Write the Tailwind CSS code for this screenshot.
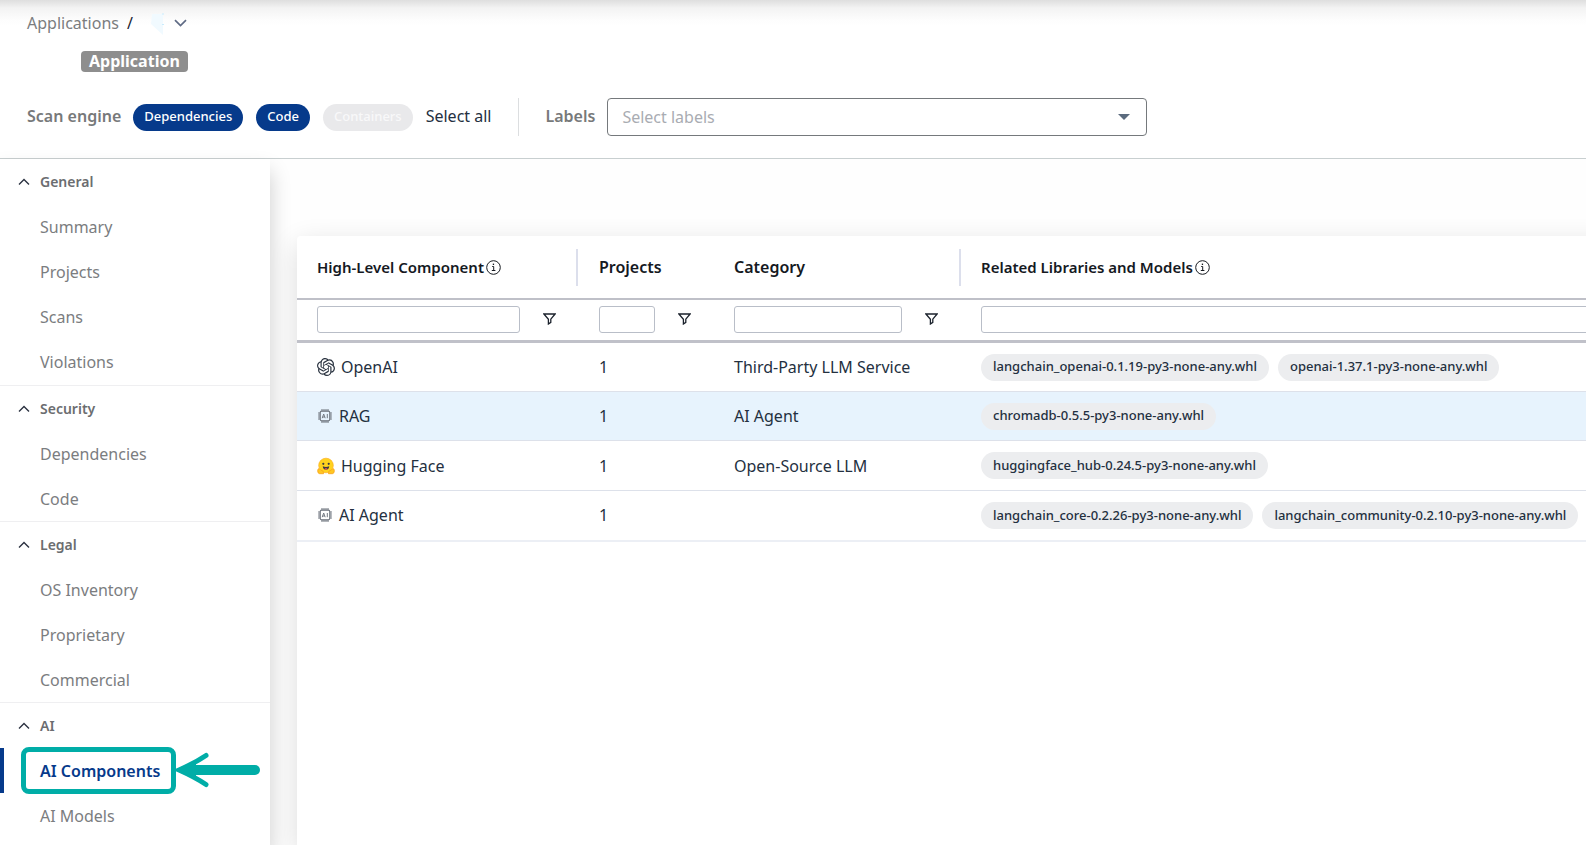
<!DOCTYPE html>
<html lang="en">
<head>
<meta charset="utf-8">
<meta name="viewport" content="width=device-width, initial-scale=1">
<title>AI Components</title>
<script src="https://cdn.jsdelivr.net/npm/@tailwindcss/browser@4"></script>
</head>
<body class="flex h-screen flex-col overflow-hidden bg-[#fefefe] font-['Noto_Sans',sans-serif] text-base text-[#24303f]">

<!-- Shared symbols -->
<svg class="hidden" aria-hidden="true">
  <symbol id="caret-up" viewBox="0 0 12 8"><path d="M1 6.500 6 1.500l5 5" fill="none" stroke="currentColor" stroke-width="1.400"/></symbol>
  <symbol id="info" viewBox="0 0 15 15"><circle cx="7.500" cy="7.500" r="6.800" fill="none" stroke="currentColor" stroke-width="1"/><path d="M6.200 6.500h1.500v4M5.800 10.500h3.600" fill="none" stroke="currentColor" stroke-width="1"/><rect x="6.800" y="3.600" width="1.300" height="1.400" fill="currentColor"/></symbol>
  <symbol id="filter" viewBox="0 0 13 12"><path d="M.9 1h11.200L7.800 6.200v3.200L5.400 11V6.200z" fill="none" stroke="currentColor" stroke-width="1.300"/></symbol>
  <symbol id="chip" viewBox="0 0 14 14"><path d="M4 0v2.500M6 0v2.500M8 0v2.500M10 0v2.500M4 11.500V14M6 11.500V14M8 11.500V14M10 11.500V14M0 4h2.500M0 6h2.500M0 8h2.500M0 10h2.500M11.500 4H14M11.500 6H14M11.500 8H14M11.500 10H14" stroke="currentColor" stroke-width="1.100"/><rect x="2.200" y="2.200" width="9.600" height="9.600" rx="1.500" fill="none" stroke="currentColor" stroke-width="1.200"/><path d="M4.200 9.200 5.700 5l1.500 4.200M4.700 8h2M9.300 5v4.200" fill="none" stroke="currentColor" stroke-width="1"/></symbol>
</svg>

<header class="flex-none border-b border-[#c8cfd0] bg-[linear-gradient(to_bottom,#dedede_0px,#f3f3f3_8px,#fdfdfd_20px,#ffffff_26px)] pb-[22px]">
  <nav aria-label="Breadcrumb" class="flex h-[46px] items-center pl-[27px] text-[#7b7d7f]">
    <a href="#">Applications</a>
    <span class="ml-2 text-[#1b2433]">/</span>
    <svg class="ml-[17px] h-[26px] w-[16px]" viewBox="0 0 16 26" aria-hidden="true"><path d="M2 4h11v21L1 14z" fill="#f1faff"/><path d="M12 4h2M12 14.500h2" stroke="#c9ecfd"/></svg>
    <button type="button" aria-label="Switch application" class="ml-2 text-[#5f6b85]"><svg class="h-2 w-[13px]" viewBox="0 0 13 8"><path d="m1 1.200 5.500 5.300L12 1.200" fill="none" stroke="currentColor" stroke-width="1.700"/></svg></button>
  </nav>
  <div class="mt-[5px] flex pl-[81px]">
    <span class="flex h-[21px] items-center rounded-[4px] bg-[#8e8e8e] px-2 pb-0.5 font-bold text-white">Application</span>
  </div>
  <div class="mt-[26px] flex h-[38px] items-center pl-[27px]">
    <span class="mr-3 pb-0.5 font-semibold text-[#77797a]">Scan engine</span>
    <div class="flex items-center gap-[13px] text-[13px] font-medium text-white">
      <button type="button" class="h-[27px] rounded-full bg-[#063a8b] px-[11px]">Dependencies</button>
      <button type="button" class="h-[27px] rounded-full bg-[#063a8b] px-[11px]">Code</button>
      <button type="button" disabled class="h-[27px] rounded-full bg-[#e9e9eb] px-[11px] text-[#f8f8f9]">Containers</button>
    </div>
    <button type="button" class="ml-[13px] pb-0.5">Select all</button>
    <span class="ml-[26px] h-full w-px bg-[#dcdee0]"></span>
    <label for="labels" class="ml-[27px] pb-0.5 font-semibold text-[#77797a]">Labels</label>
    <div class="relative ml-3 w-[540px]">
      <select id="labels" class="h-[38px] w-full appearance-none rounded-[4px] border border-[#75797c] bg-white pl-[14px] text-[#a9acb2]"><option>Select labels</option></select>
      <svg class="pointer-events-none absolute top-4 right-[17px] h-[6px] w-3" viewBox="0 0 12 6" aria-hidden="true"><path d="M0 0h12L6 6z" fill="#5b6b7e"/></svg>
    </div>
  </div>
</header>

<div class="flex min-h-0 flex-1">
  <aside class="z-10 w-[270px] flex-none bg-white shadow-[0_12px_20px_rgba(0,0,0,0.2)]">
    <nav aria-label="Application sections" class="text-[#7b7d7f]">
      <section class="border-b border-[#efeff1] pb-px">
        <button type="button" class="flex h-[45px] w-full items-center gap-[10px] pl-[18px] text-sm font-semibold text-[#6b6d70]"><svg class="h-2 w-3 text-[#2b3240]"><use href="#caret-up"/></svg>General</button>
        <ul>
          <li><a href="#" class="flex h-[45px] items-center pl-10">Summary</a></li>
          <li><a href="#" class="flex h-[45px] items-center pl-10">Projects</a></li>
          <li><a href="#" class="flex h-[45px] items-center pl-10">Scans</a></li>
          <li><a href="#" class="flex h-[45px] items-center pl-10">Violations</a></li>
        </ul>
      </section>
      <section class="border-b border-[#efeff1]">
        <button type="button" class="flex h-[45px] w-full items-center gap-[10px] pl-[18px] text-sm font-semibold text-[#6b6d70]"><svg class="h-2 w-3 text-[#2b3240]"><use href="#caret-up"/></svg>Security</button>
        <ul>
          <li><a href="#" class="flex h-[45px] items-center pl-10">Dependencies</a></li>
          <li><a href="#" class="flex h-[45px] items-center pl-10">Code</a></li>
        </ul>
      </section>
      <section class="border-b border-[#efeff1]">
        <button type="button" class="flex h-[45px] w-full items-center gap-[10px] pl-[18px] text-sm font-semibold text-[#6b6d70]"><svg class="h-2 w-3 text-[#2b3240]"><use href="#caret-up"/></svg>Legal</button>
        <ul>
          <li><a href="#" class="flex h-[45px] items-center pl-10">OS Inventory</a></li>
          <li><a href="#" class="flex h-[45px] items-center pl-10">Proprietary</a></li>
          <li><a href="#" class="flex h-[45px] items-center pl-10">Commercial</a></li>
        </ul>
      </section>
      <section>
        <button type="button" class="flex h-[45px] w-full items-center gap-[10px] pl-[18px] text-sm font-semibold text-[#6b6d70]"><svg class="h-2 w-3 text-[#2b3240]"><use href="#caret-up"/></svg>AI</button>
        <ul>
          <li class="relative">
            <a href="#" aria-current="page" class="flex h-[45px] items-center border-l-4 border-[#063a8b] pl-9 font-semibold text-[#063a8b]">AI Components</a>
            <!-- Callout: box and arrow -->
            <span class="pointer-events-none absolute -top-px left-[21px] h-[47px] w-[155px] rounded-[8px] border-[5px] border-[#00ada7]"></span>
            <svg class="pointer-events-none absolute top-1 left-[174px] h-[36px] w-[88px]" viewBox="0 0 88 36" aria-hidden="true"><g fill="none" stroke="#00ada7" stroke-linecap="round"><path d="M14 18h67" stroke-width="10"/><path d="M32 3.500C23 9.500 14 14 5 18c9 4 18 8.500 27 14.500" stroke-width="5"/></g><path d="M1 18 22 8v20z" fill="#00ada7"/></svg>
          </li>
          <li><a href="#" class="flex h-[45px] items-center pl-10">AI Models</a></li>
        </ul>
      </section>
    </nav>
  </aside>

  <main class="min-w-0 flex-1 overflow-hidden pt-[77px] pl-[27px]">
    <div class="-mr-8 h-full rounded-tl-[4px] bg-white pr-8 shadow-[0_8px_28px_rgba(0,0,0,0.14)]">
      <table class="w-[calc(100%+120px)] table-fixed border-collapse text-left">
        <colgroup><col class="w-[282px]"><col class="w-[135px]"><col class="w-[247px]"><col></colgroup>
        <thead>
          <tr class="border-b-2 border-[#bfc0c8] text-[#15191f]">
            <th scope="col" class="p-0 pl-5 font-semibold"><div class="flex h-[62px] items-center justify-between text-[15px]"><span class="flex items-center gap-0.5">High-Level Component<svg class="h-[15px] w-[15px]"><use href="#info"/></svg></span><span class="mr-px h-[37px] w-[2px] bg-[#dcdfec]"></span></div></th>
            <th scope="col" class="p-0 pl-5 font-semibold">Projects</th>
            <th scope="col" class="p-0 pl-5 font-semibold"><div class="flex items-center justify-between">Category<span class="h-[37px] w-[2px] bg-[#dcdfec]"></span></div></th>
            <th scope="col" class="p-0 pl-5 text-[15px] font-semibold"><span class="flex items-center gap-0.5">Related Libraries and Models<svg class="h-[15px] w-[15px]"><use href="#info"/></svg></span></th>
          </tr>
          <tr class="border-b-[3px] border-[#c0c1c9]">
            <td class="p-0 pl-5"><div class="flex h-[40px] items-center pr-[23px] pb-0.5"><input type="text" aria-label="Filter by component" class="h-[27px] min-w-0 flex-1 rounded-[3px] border border-[#b9bec8] px-2"><button type="button" aria-label="Component filter options" class="flex w-[36px] flex-none justify-end text-[#1b222c]"><svg class="h-3 w-[13px]"><use href="#filter"/></svg></button></div></td>
            <td class="p-0 pl-5"><div class="flex h-[40px] items-center pr-[23px] pb-0.5"><input type="text" aria-label="Filter by projects" class="h-[27px] min-w-0 flex-1 rounded-[3px] border border-[#b9bec8] px-2"><button type="button" aria-label="Projects filter options" class="flex w-[36px] flex-none justify-end text-[#1b222c]"><svg class="h-3 w-[13px]"><use href="#filter"/></svg></button></div></td>
            <td class="p-0 pl-5"><div class="flex h-[40px] items-center pr-[23px] pb-0.5"><input type="text" aria-label="Filter by category" class="h-[27px] min-w-0 flex-1 rounded-[3px] border border-[#b9bec8] px-2"><button type="button" aria-label="Category filter options" class="flex w-[36px] flex-none justify-end text-[#1b222c]"><svg class="h-3 w-[13px]"><use href="#filter"/></svg></button></div></td>
            <td class="p-0 pl-5"><div class="flex h-[40px] items-center pr-[23px] pb-0.5"><input type="text" aria-label="Filter by libraries and models" class="h-[27px] min-w-0 flex-1 rounded-[3px] border border-[#b9bec8] px-2"></div></td>
          </tr>
        </thead>
        <tbody>
          <tr class="h-[50px] border-b border-[#dde1ea]">
            <td class="p-0 pl-5"><div class="flex items-center gap-[6px]"><svg class="h-[18px] w-[18px]" viewBox="0 0 24 24" fill="#2a3340" aria-hidden="true"><path d="M22.2819 9.8211a5.9847 5.9847 0 0 0-.5157-4.9108 6.0462 6.0462 0 0 0-6.5098-2.9A6.0651 6.0651 0 0 0 4.9807 4.1818a5.9847 5.9847 0 0 0-3.9977 2.9 6.0462 6.0462 0 0 0 .7427 7.0966 5.98 5.98 0 0 0 .511 4.9107 6.051 6.051 0 0 0 6.5146 2.9001A5.9847 5.9847 0 0 0 13.2599 24a6.0557 6.0557 0 0 0 5.7718-4.2058 5.9894 5.9894 0 0 0 3.9977-2.9001 6.0557 6.0557 0 0 0-.7475-7.0729zm-9.022 12.6081a4.4755 4.4755 0 0 1-2.8764-1.0408l.1419-.0804 4.7783-2.7582a.7948.7948 0 0 0 .3927-.6813v-6.7369l2.02 1.1686a.071.071 0 0 1 .038.052v5.5826a4.504 4.504 0 0 1-4.4945 4.4944zm-9.6607-4.1254a4.4708 4.4708 0 0 1-.5346-3.0137l.142.0852 4.783 2.7582a.7712.7712 0 0 0 .7806 0l5.8428-3.3685v2.3324a.0804.0804 0 0 1-.0332.0615L9.74 19.9502a4.4992 4.4992 0 0 1-6.1408-1.6464zM2.3408 7.8956a4.485 4.485 0 0 1 2.3655-1.9728V11.6a.7664.7664 0 0 0 .3879.6765l5.8144 3.3543-2.0201 1.1685a.0757.0757 0 0 1-.071 0l-4.8303-2.7865A4.504 4.504 0 0 1 2.3408 7.872zm16.5963 3.8558L13.1038 8.364 15.1192 7.2a.0757.0757 0 0 1 .071 0l4.8303 2.7913a4.4944 4.4944 0 0 1-.6765 8.1042v-5.6772a.79.79 0 0 0-.407-.667zm2.0107-3.0231l-.142-.0852-4.7735-2.7818a.7759.7759 0 0 0-.7854 0L9.409 9.2297V6.8974a.0662.0662 0 0 1 .0284-.0615l4.8303-2.7866a4.4992 4.4992 0 0 1 6.6802 4.66zM8.3065 12.863l-2.02-1.1638a.0804.0804 0 0 1-.038-.0567V6.0742a4.4992 4.4992 0 0 1 7.3757-3.4537l-.142.0805L8.704 5.459a.7948.7948 0 0 0-.3927.6813zm1.0976-2.3654l2.602-1.4998 2.6069 1.4998v2.9994l-2.5974 1.4997-2.6067-1.4997Z"/></svg>OpenAI</div></td>
            <td class="p-0 pl-5">1</td>
            <td class="p-0 pl-5">Third-Party LLM Service</td>
            <td class="p-0 pl-5"><div class="flex gap-[9px] text-[13px] font-medium whitespace-nowrap"><span class="flex h-[27px] items-center rounded-full bg-[#ecedef] px-3">langchain_openai-0.1.19-py3-none-any.whl</span><span class="flex h-[27px] items-center rounded-full bg-[#ecedef] px-3">openai-1.37.1-py3-none-any.whl</span></div></td>
          </tr>
          <tr class="h-[49px] border-b border-[#dde1ea] bg-[#e7f3fd]">
            <td class="p-0 pl-5"><div class="flex items-center gap-[7px] pl-px"><svg class="h-[14px] w-[14px] text-[#747a83]" aria-hidden="true"><use href="#chip"/></svg>RAG</div></td>
            <td class="p-0 pl-5">1</td>
            <td class="p-0 pl-5">AI Agent</td>
            <td class="p-0 pl-5"><div class="flex gap-[9px] text-[13px] font-medium whitespace-nowrap"><span class="flex h-[27px] items-center rounded-full bg-[#ecedef] px-3">chromadb-0.5.5-py3-none-any.whl</span></div></td>
          </tr>
          <tr class="h-[50px] border-b border-[#dde1ea]">
            <td class="p-0 pl-5"><div class="flex items-center gap-[6px]"><svg class="h-[18px] w-[18px]" viewBox="0 0 18 18" aria-hidden="true"><circle cx="9" cy="8.500" r="7.300" fill="#ffd21e" stroke="#fdb022" stroke-width=".7"/><path d="M1 12.200c.8-1 2-.2 3.200 1.200 1-.4 2.600 1 2.400 3.300H2.600C.8 16.700.3 13.600 1 12.200zM17 12.200c-.8-1-2-.2-3.200 1.200-1-.4-2.600 1-2.400 3.300h4c1.800 0 2.300-3.100 1.600-4.500z" fill="#ffc722" stroke="#f9a21b" stroke-width=".8"/><circle cx="6.300" cy="6.800" r="1.100" fill="#3a3b45"/><circle cx="11.700" cy="6.800" r="1.100" fill="#3a3b45"/><path d="M5.800 9.200c2 1 4.400 1 6.400 0 0 2.200-1.300 3.400-3.200 3.400S5.800 11.400 5.800 9.200z" fill="#3a3b45"/><path d="M7.500 12c.6-1.200 2.400-1.200 3 0-.8.800-2.200.8-3 0z" fill="#ef4e4e"/></svg>Hugging Face</div></td>
            <td class="p-0 pl-5">1</td>
            <td class="p-0 pl-5">Open-Source LLM</td>
            <td class="p-0 pl-5"><div class="flex gap-[9px] text-[13px] font-medium whitespace-nowrap"><span class="flex h-[27px] items-center rounded-full bg-[#ecedef] px-3">huggingface_hub-0.24.5-py3-none-any.whl</span></div></td>
          </tr>
          <tr class="h-[50px] border-b-2 border-[#eceff5]">
            <td class="p-0 pl-5"><div class="flex items-center gap-[7px] pl-px"><svg class="h-[14px] w-[14px] text-[#747a83]" aria-hidden="true"><use href="#chip"/></svg>AI Agent</div></td>
            <td class="p-0 pl-5">1</td>
            <td class="p-0 pl-5"></td>
            <td class="p-0 pl-5"><div class="flex gap-[9px] text-[13px] font-medium whitespace-nowrap"><span class="flex h-[27px] items-center rounded-full bg-[#ecedef] px-3">langchain_core-0.2.26-py3-none-any.whl</span><span class="flex h-[27px] items-center rounded-full bg-[#ecedef] px-3">langchain_community-0.2.10-py3-none-any.whl</span></div></td>
          </tr>
        </tbody>
      </table>
    </div>
  </main>
</div>
</body>
</html>
